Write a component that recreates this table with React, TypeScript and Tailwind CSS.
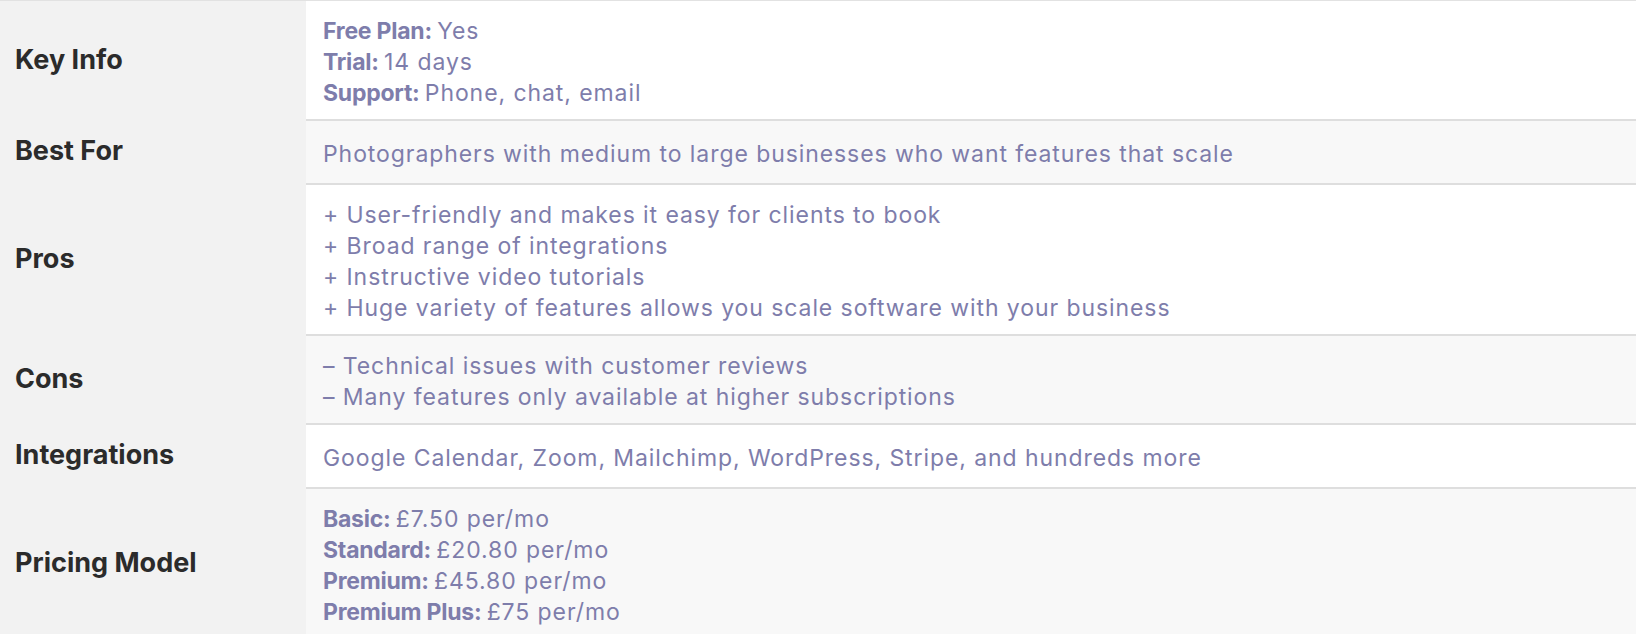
const rows: { label: string; bg: string; lines: { b?: string; t: string }[] }[] = [
  {
    label: 'Key Info',
    bg: 'bg-white',
    lines: [
      { b: 'Free Plan:', t: 'Yes' },
      { b: 'Trial:', t: '14 days' },
      { b: 'Support:', t: 'Phone, chat, email' },
    ],
  },
  {
    label: 'Best For',
    bg: 'bg-[#f8f8f8]',
    lines: [{ t: 'Photographers with medium to large businesses who want features that scale' }],
  },
  {
    label: 'Pros',
    bg: 'bg-white',
    lines: [
      { t: '+ User-friendly and makes it easy for clients to book' },
      { t: '+ Broad range of integrations' },
      { t: '+ Instructive video tutorials' },
      { t: '+ Huge variety of features allows you scale software with your business' },
    ],
  },
  {
    label: 'Cons',
    bg: 'bg-[#f8f8f8]',
    lines: [
      { t: '– Technical issues with customer reviews' },
      { t: '– Many features only available at higher subscriptions' },
    ],
  },
  {
    label: 'Integrations',
    bg: 'bg-white',
    lines: [{ t: 'Google Calendar, Zoom, Mailchimp, WordPress, Stripe, and hundreds more' }],
  },
  {
    label: 'Pricing Model',
    bg: 'bg-[#f8f8f8]',
    lines: [
      { b: 'Basic:', t: '£7.50 per/mo' },
      { b: 'Standard:', t: '£20.80 per/mo' },
      { b: 'Premium:', t: '£45.80 per/mo' },
      { b: 'Premium Plus:', t: '£75 per/mo' },
    ],
  },
];

export default function App() {
  return (
    <div className="w-full bg-white font-['Inter',sans-serif]">
      <div className="grid grid-cols-[306px_1fr] border-t border-[#e2e2e2]">
        {rows.map((row, i) => (
          <div key={row.label} className="contents">
            <div className="bg-[#f2f2f2] flex items-center px-[15px] py-[15px]">
              <span className="text-[27px] leading-[34px] font-bold text-[#2b2b2b]">{row.label}</span>
            </div>
            <div className={`${row.bg} ${i > 0 ? 'border-t-2 border-[#dedede]' : ''} px-[17px] pt-[15px] pb-[10px] flex flex-col justify-center`}>
              {row.lines.map((l, j) => (
                <p key={j} className="text-[23px] leading-[31px] text-[#7e7dab] tracking-[0.04em]">
                  {l.b && <span className="font-bold tracking-[-0.01em]">{l.b} </span>}
                  {l.t}
                </p>
              ))}
            </div>
          </div>
        ))}
      </div>
    </div>
  );
}
